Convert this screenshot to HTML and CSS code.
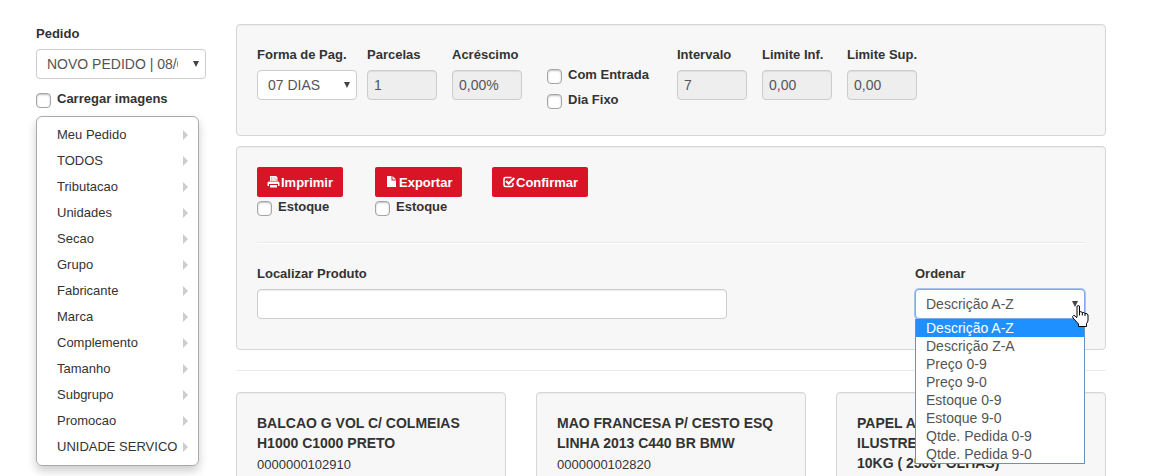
FILE: index.html
```html
<!doctype html>
<html lang="pt-BR">
  <head>
    <meta charset="UTF-8" />
    <meta name="viewport" content="width=device-width, initial-scale=1.0" />
    <title>Pedido</title>
    <link rel="stylesheet" href="styles.css">
  </head>
  <body>
    <div class="page">
      <aside class="sidebar">
        <div class="field">
          <label for="pedido">Pedido</label>
          <select id="pedido" class="control">
            <option>NOVO PEDIDO | 08/04/2015</option>
          </select>
        </div>
        <label class="check"><input type="checkbox" /> Carregar imagens</label>
        <nav class="menu">
          <a href="#">Meu Pedido</a>
          <a href="#">TODOS</a>
          <a href="#">Tributacao</a>
          <a href="#">Unidades</a>
          <a href="#">Secao</a>
          <a href="#">Grupo</a>
          <a href="#">Fabricante</a>
          <a href="#">Marca</a>
          <a href="#">Complemento</a>
          <a href="#">Tamanho</a>
          <a href="#">Subgrupo</a>
          <a href="#">Promocao</a>
          <a href="#">UNIDADE SERVICO</a>
        </nav>
      </aside>

      <main class="content">
        <form class="well payment">
          <div class="field">
            <label for="forma">Forma de Pag.</label>
            <select id="forma" class="control method">
              <option>07 DIAS</option>
            </select>
          </div>
          <div class="field">
            <label for="parcelas">Parcelas</label>
            <input id="parcelas" class="control short" type="text" value="1" disabled />
          </div>
          <div class="field">
            <label for="acrescimo">Acréscimo</label>
            <input id="acrescimo" class="control short" type="text" value="0,00%" disabled />
          </div>
          <div class="checks">
            <label class="check"><input type="checkbox" /> Com Entrada</label>
            <label class="check"><input type="checkbox" /> Dia Fixo</label>
          </div>
          <div class="field">
            <label for="intervalo">Intervalo</label>
            <input id="intervalo" class="control short" type="text" value="7" disabled />
          </div>
          <div class="field">
            <label for="limite-inf">Limite Inf.</label>
            <input id="limite-inf" class="control short" type="text" value="0,00" disabled />
          </div>
          <div class="field">
            <label for="limite-sup">Limite Sup.</label>
            <input id="limite-sup" class="control short" type="text" value="0,00" disabled />
          </div>
        </form>

        <section class="well">
          <div class="actions">
            <div>
              <button class="btn" type="button">
                <svg width="14" height="14" viewBox="0 0 14 14" fill="#fff">
                  <path d="M3 1h6l1.500 1.500V6h-1V3.500H8V2H4.500v4H3z" />
                  <path d="M4.500 2H8v1.500h1.500V6h-5z" opacity=".85" />
                  <path d="M2 6.500h9a1.500 1.500 0 0 1 1.500 1.500v3H11V9H2v2H.500V8A1.500 1.500 0 0 1 2 6.500z" />
                  <path d="M3 10h7v2.500H3z" />
                </svg>Imprimir
              </button>
              <label class="check"><input type="checkbox" /> Estoque</label>
            </div>
            <div>
              <button class="btn" type="button">
                <svg width="14" height="14" viewBox="0 0 14 14" fill="#fff">
                  <path d="M2 1h4.500v4.500H11V12H2z" />
                  <path d="M7.500 1L11 4.500H7.500z" />
                </svg>Exportar
              </button>
              <label class="check"><input type="checkbox" /> Estoque</label>
            </div>
            <div>
              <button class="btn" type="button">
                <svg width="14" height="14" viewBox="0 0 14 14" fill="none" stroke="#fff">
                  <path d="M9.500 2.500h-6Q2 2.500 2 4v6q0 1.500 1.500 1.500h6Q11 11.500 11 10V8" stroke-width="1.500" />
                  <path d="M4 6l2.700 2.700L12.300 3" stroke-width="2.200" />
                </svg>Confirmar
              </button>
            </div>
          </div>
          <hr>
          <div class="search">
            <div class="field search-box">
              <label for="localizar">Localizar Produto</label>
              <input id="localizar" class="control" type="text" />
            </div>
            <div class="field order">
              <label for="ordenar">Ordenar</label>
              <select id="ordenar" class="control focused">
                <option>Descrição A-Z</option>
              </select>
              <ul class="options">
                <li class="selected">Descrição A-Z</li>
                <li>Descrição Z-A</li>
                <li>Preço 0-9</li>
                <li>Preço 9-0</li>
                <li>Estoque 0-9</li>
                <li>Estoque 9-0</li>
                <li>Qtde. Pedida 0-9</li>
                <li>Qtde. Pedida 9-0</li>
              </ul>
              <svg class="cursor" width="17" height="22" viewBox="0 0 17 22">
                <path d="M5 12V2Q5 .500 6.300.500T7.500 2v5Q9 6 10.300 7.500 12 7 13 8.500q2.500-.5 3 1.500v5q0 2-1.500 3.500v3h-8v-2.500L1 13q-1-2 .500-2.500T5 13" fill="#fff" stroke="#000" stroke-linejoin="round" />
                <path d="M7.500 7v3.500M10.300 7.500v3M13 8.500v2.500" stroke="#000" />
              </svg>
            </div>
          </div>
        </section>

        <hr>

        <div class="products">
          <article class="well">
            <h4>BALCAO G VOL C/ COLMEIAS H1000 C1000 PRETO</h4>
            <span>0000000102910</span>
          </article>
          <article class="well">
            <h4>MAO FRANCESA P/ CESTO ESQ LINHA 2013 C440 BR BMW</h4>
            <span>0000000102820</span>
          </article>
          <article class="well">
            <h4>PAPEL A<br>ILUSTRE<br>10KG ( 2500FOLHAS)</h4>
          </article>
        </div>
      </main>
    </div>
  </body>
</html>
```

FILE: styles.css
```css
* {
  box-sizing: border-box;
}
body {
  margin: 0;
  font-family: "Liberation Sans", Arial, sans-serif;
  font-size: 13px;
  line-height: 20px;
  color: #333;
  background-color: #fff;
}
.page {
  display: flex;
  gap: 30px;
  padding: 24px 67px 0 36px;
}
.sidebar {
  width: 170px;
  flex-shrink: 0;
}
.content {
  flex: 1;
  min-width: 0;
}

/* forms */
label {
  display: block;
  font-weight: bold;
  white-space: nowrap;
}
.field label {
  margin-bottom: 5px;
}
.control {
  display: block;
  width: 100%;
  height: 30px;
  margin: 0;
  padding: 4px 6px;
  border: 1px solid #ccc;
  border-radius: 4px;
  background-color: #fff;
  box-shadow: inset 0 1px 1px rgba(0, 0, 0, 0.075);
  font-family: inherit;
  font-size: 14px;
  line-height: 20px;
  color: #555;
}
.control:disabled {
  background-color: #eee;
}
select.control {
  appearance: none;
  padding: 4px 27px 4px 10px;
  box-shadow: none;
  background-image: url("data:image/svg+xml,%3Csvg xmlns='http://www.w3.org/2000/svg' width='6' height='6'%3E%3Cpath d='M0 0h6L3 6z' fill='%23444'/%3E%3C/svg%3E");
  background-repeat: no-repeat;
  background-position: right 6px center;
}
.control.method {
  width: 100px;
}
.control.short {
  width: 70px;
}
.control.focused {
  border-color: #7da7e8;
  box-shadow: 0 0 0 1px #a9c6f2;
}
.check {
  display: flex;
  gap: 6px;
}
.check input {
  appearance: none;
  width: 15px;
  height: 15px;
  margin: 4px 0 0;
  border: 1px solid #a5a5a5;
  border-radius: 4px;
  background-color: #fff;
  box-shadow: inset 0 1px 2px rgba(0, 0, 0, 0.25);
}

/* side menu */
.sidebar .check {
  margin-top: 10px;
}
.menu {
  width: 163px;
  margin-top: 7px;
  padding: 5px 0;
  border: 1px solid #aaa;
  border-radius: 6px;
  box-shadow: 0 5px 10px rgba(0, 0, 0, 0.2);
}
.menu a {
  display: flex;
  justify-content: space-between;
  align-items: center;
  padding: 0 10px 0 20px;
  line-height: 26px;
  color: #333;
  text-decoration: none;
  white-space: nowrap;
}
.menu a::after {
  content: "";
  border: 5px solid transparent;
  border-right-width: 0;
  border-left-color: #ccc;
}

/* panels */
.well {
  padding: 20px;
  border: 1px solid #d6d6d6;
  border-radius: 4px;
  background-color: #f7f7f7;
  box-shadow: inset 0 1px 1px rgba(0, 0, 0, 0.05);
}
.payment {
  display: grid;
  grid-template-columns: 110px 85px 95px 130px 85px 85px 70px;
  margin-bottom: 10px;
  padding-bottom: 25px;
}
.checks {
  display: grid;
  gap: 5px;
  padding-top: 20px;
}
.payment .check {
  height: 20px;
}
hr {
  margin: 20px 0;
  border: 0;
  border-top: 1px solid #eaeaea;
  border-bottom: 1px solid #fff;
}
.actions {
  display: grid;
  grid-template-columns: 118px 117px auto;
  padding-bottom: 5px;
}
.btn {
  display: flex;
  align-items: center;
  height: 30px;
  padding: 0 10px;
  border: 0;
  border-radius: 2px;
  background-color: #d91426;
  color: #fff;
  font-family: inherit;
  font-size: 13px;
  font-weight: bold;
  cursor: pointer;
}
.search {
  display: flex;
  justify-content: space-between;
  padding-bottom: 10px;
}
.search-box {
  width: 470px;
}

/* sort list */
.order {
  position: relative;
  width: 170px;
}
.options {
  position: absolute;
  top: 55px;
  left: 0;
  right: 0;
  z-index: 1;
  margin: 0;
  padding: 0;
  border: 1px solid #6b8fc4;
  border-top: 0;
  background-color: #fff;
  list-style: none;
  font-size: 14px;
  line-height: 18px;
  color: #555;
}
.options li {
  padding: 0 10px;
}
.options .selected {
  background-color: #1e90ff;
  color: #fff;
}
.cursor {
  position: absolute;
  top: 41px;
  right: -4px;
  z-index: 2;
}

/* products */
.products {
  display: grid;
  grid-template-columns: repeat(3, 1fr);
  gap: 30px;
}
.products h4 {
  margin: 0 0 2px;
  font-size: 14px;
  line-height: 20px;
}
```
